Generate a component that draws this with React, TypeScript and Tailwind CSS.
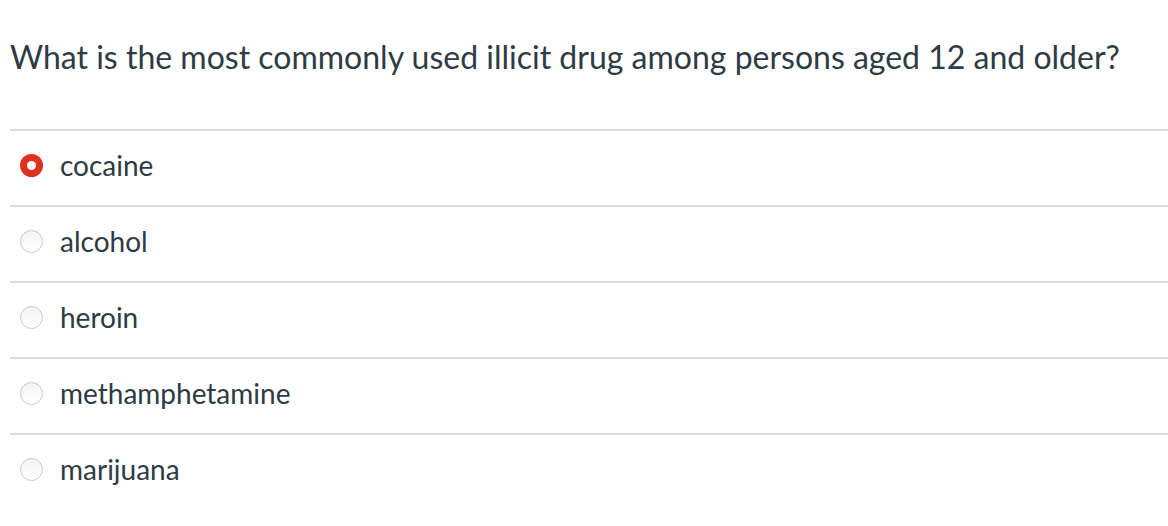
import React from "react";

const options = ["cocaine", "alcohol", "heroin", "methamphetamine", "marijuana"];

function Radio({ checked }: { checked: boolean }) {
  if (checked) {
    return (
      <span className="flex h-[23px] w-[23px] shrink-0 items-center justify-center rounded-full bg-[#e0301e]">
        <span className="h-[9px] w-[9px] rounded-full bg-white" />
      </span>
    );
  }
  return (
    <span className="h-[23px] w-[23px] shrink-0 rounded-full border border-[#c8c8c8] bg-gradient-to-b from-[#f4f4f4] to-white" />
  );
}

export default function App() {
  return (
    <div
      className="h-[526px] w-[1168px] overflow-hidden bg-white pl-[10px] text-[#2d3b45]"
      style={{ fontFamily: "Lato, 'Noto Sans', sans-serif" }}
    >
      <div className="h-[129px] pt-[33px] text-[32px] leading-[48px]">
        What is the most commonly used illicit drug among persons aged 12 and older?
      </div>
      {options.map((o, i) => (
        <div
          key={o}
          className="flex h-[76px] items-center border-t-2 border-[#dcdcdc] pb-[6px] pl-[10px]"
        >
          <Radio checked={i === 0} />
          <span className="ml-[17px] text-[28px] leading-[40px]">{o}</span>
        </div>
      ))}
    </div>
  );
}
